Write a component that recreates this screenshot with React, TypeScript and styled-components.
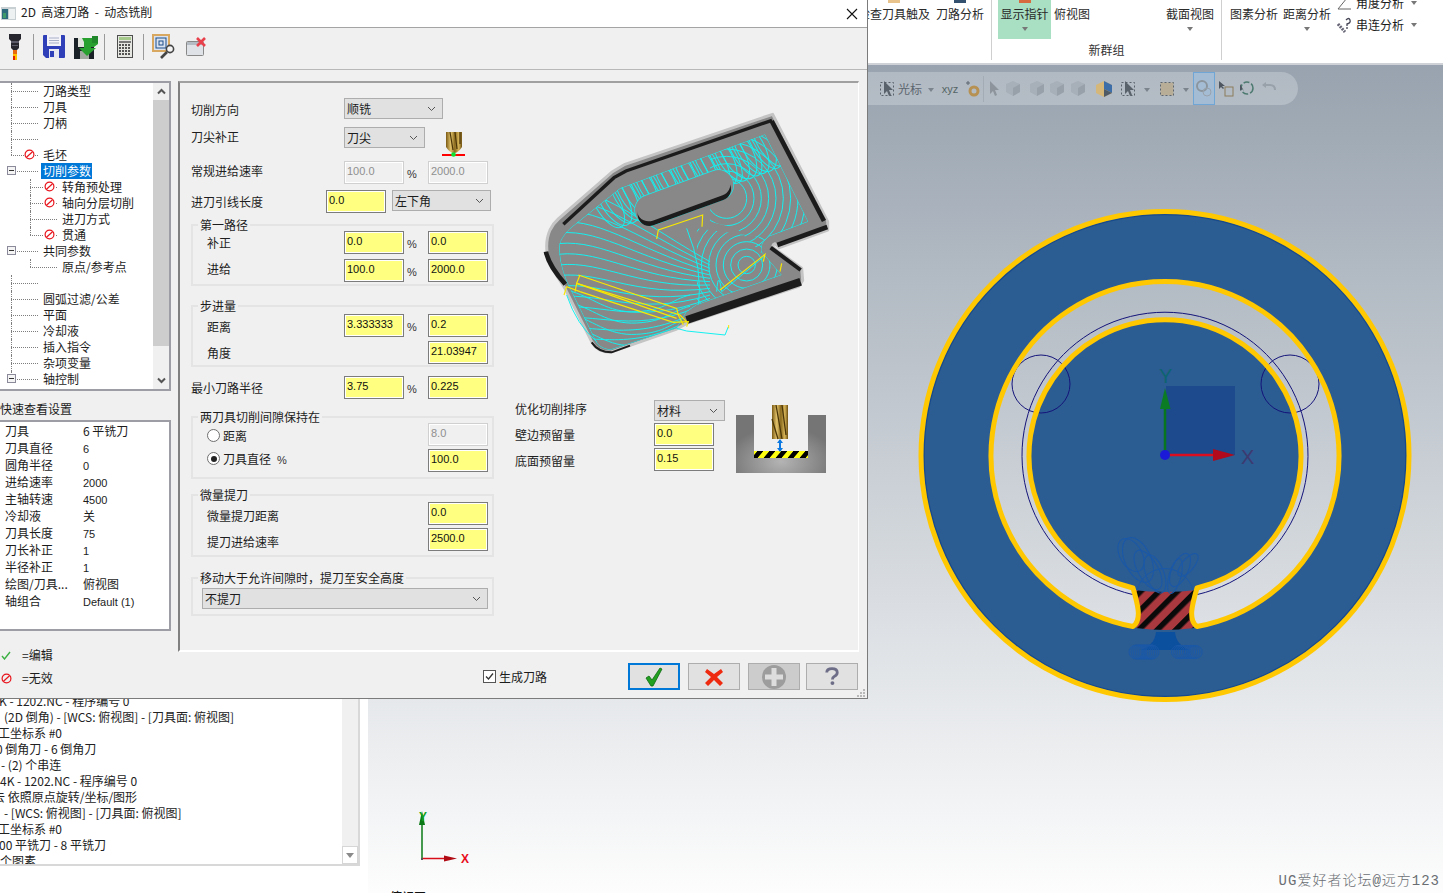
import React from "react";
import styled, { createGlobalStyle } from "styled-components";

const Global = createGlobalStyle`
  html, body { margin: 0; padding: 0; width: 1443px; height: 893px; overflow: hidden; background: #fff; }
  * { box-sizing: border-box; }
  body { font-family: "Noto Sans CJK SC", "Liberation Sans", sans-serif; font-size: 12px; color: #1c1c1c; }
`;

const Page = styled.div`
  position: relative; width: 1443px; height: 893px; overflow: hidden;
  display: flex; flex-direction: column;
`;

/* ---------- ribbon ---------- */
const Ribbon = styled.header`
  height: 65px; flex: none; display: flex; padding-left: 858px; background: #fff;
  border-bottom: 2px solid #cfd2d6;
`;
const RibbonGroup = styled.div<{ $w: number }>`
  width: ${(p) => p.$w}px; height: 60px; border-right: 1px solid #cfcfcf; display: flex; flex-direction: column;
  &:last-child { border-right: 0; }
`;
const RibbonTools = styled.div<{ $pl?: number }>`
  display: flex; height: 39px; padding-left: ${(p) => p.$pl ?? 0}px;
`;
const RibbonCaption = styled.div`
  text-align: center; line-height: 16px; margin-top: 3px; color: #333;
`;
const Tool = styled.div<{ $w: number; $ml?: number; $on?: boolean; $stub?: string }>`
  position: relative; width: ${(p) => p.$w}px; margin-left: ${(p) => p.$ml ?? 0}px; height: 39px; padding-top: 6px;
  line-height: 16px; text-align: center; white-space: nowrap; color: #2a2a2a;
  background: ${(p) => (p.$on ? "#a9dfc2" : "transparent")};
  ${(p) => p.$stub ? `&::before { content: ""; position: absolute; left: 50%; margin-left: -6px; top: 0; width: 12px; height: 3px; background: ${p.$stub}; }` : ""}
`;
const Caret = styled.i`
  display: block; width: 0; height: 0; margin: 5px auto 0; border: 3px solid transparent; border-top: 4px solid #777; border-bottom: 0;
`;
const SmallTools = styled.div`
  margin-left: 6px; margin-top: -5px; display: flex; flex-direction: column; gap: 6px;
`;
const SmallTool = styled.div`
  display: flex; align-items: center; gap: 4px; line-height: 16px; height: 16px; white-space: nowrap;
  &::after { content: ""; border: 3px solid transparent; border-top: 4px solid #777; border-bottom: 0; margin-left: 3px; }
`;

/* ---------- main app ---------- */
const Main = styled.div`
  flex: 1; display: flex; min-height: 0;
`;
const LeftPane = styled.aside`
  width: 368px; flex: none; background: #fff; display: flex; flex-direction: column;
`;
const ListFrame = styled.div`
  width: 360px; height: 801px; display: flex; border-right: 2px solid #d8d8d8; border-bottom: 2px solid #d8d8d8;
`;
const ListBody = styled.div`
  flex: 1; min-width: 0; overflow: hidden; display: flex; flex-direction: column; justify-content: flex-end;
`;
const ListRows = styled.div`
  margin-bottom: -5px;
`;
const ListRow = styled.div<{ $x: number }>`
  height: 16px; line-height: 16px; white-space: nowrap; margin-left: ${(p) => p.$x}px; color: #222;
`;
const ListScroll = styled.div`
  width: 16px; flex: none; background: #f0f0f0; display: flex; flex-direction: column; justify-content: flex-end;
`;
const ListDown = styled.div`
  height: 18px; background: #fff; border: 1px solid #d6d6d6; display: flex; align-items: center; justify-content: center;
  &::after { content: ""; border: 4px solid transparent; border-top: 5px solid #8a8a8a; border-bottom: 0; }
`;
const Viewport = styled.section`
  position: relative; flex: 1; overflow: hidden; background: linear-gradient(180deg, #98a3af 0%, #fdfdfd 100%);
`;
const Canvas = styled.svg`
  position: absolute; left: 0; top: 0; display: block;
`;
const Pill = styled.div`
  position: absolute; left: 500px; top: 7px; width: 430px; height: 33px; border-radius: 0 17px 17px 0;
  background: rgba(255, 255, 255, 0.24); display: flex; align-items: center; padding-left: 11px; color: #566;
`;
const PillSlot = styled.div<{ $w: number; $on?: boolean }>`
  width: ${(p) => p.$w}px; height: ${(p) => (p.$on ? 33 : 20)}px; flex: none; display: flex; align-items: center; justify-content: center;
  ${(p) => (p.$on ? "background: #a5bdd4; border: 1px solid #6fa6d6;" : "")}
`;
const PillText = styled.span`
  color: #5d6670; line-height: 16px; white-space: nowrap;
`;
const PillCaret = styled.i`
  border: 3px solid transparent; border-top: 4px solid #7b838c; border-bottom: 0; margin-top: 2px;
`;
const PillSep = styled.i`
  width: 1px; height: 26px; background: #a3abb4; flex: none;
`;
const Watermark = styled.div`
  position: absolute; right: 3px; bottom: 3px; font-family: "Liberation Mono", "Noto Sans CJK SC", monospace; font-size: 14px;
  letter-spacing: 1px; line-height: 18px; color: #6a6e73; font-weight: 300; white-space: nowrap;
`;
const CutLabel = styled.div`
  position: absolute; left: 22px; top: 824px; line-height: 16px; font-weight: 500; color: #111;
`;

/* ---------- dialog ---------- */
const Dialog = styled.div`
  position: absolute; left: 0; top: 0; z-index: 2; width: 868px; height: 699px; background: #f0f0f0;
  border-right: 1px solid #7b7b7b; border-bottom: 1px solid #7b7b7b; display: flex; flex-direction: column;
`;
const TitleBar = styled.div`
  height: 28px; flex: none; background: #fff; border-bottom: 1px solid #a4a4a4; display: flex; align-items: center; padding-left: 1px; padding-right: 9px;
`;
const TitleText = styled.div`
  margin-left: 5px; line-height: 16px; flex: 1; color: #222; margin-top: -3px; white-space: pre;
`;
const DialogToolbar = styled.div`
  height: 42px; flex: none; border-bottom: 1px solid #b8b8b8; display: flex; align-items: center; padding: 0 0 4px 8px;
`;
const ToolBtn = styled.div<{ $ml: number }>`
  margin-left: ${(p) => p.$ml}px; display: flex; align-items: center; flex: none;
`;
const ToolSep = styled.i<{ $ml: number }>`
  width: 1px; height: 26px; background: #9a9a9a; margin-left: ${(p) => p.$ml}px; flex: none;
`;
const DialogBody = styled.div`
  flex: 1; display: flex; padding-top: 11px; gap: 7px; min-height: 0; position: relative;
`;
const SideColumn = styled.div`
  width: 171px; flex: none; display: flex; flex-direction: column;
`;
const TreeBox = styled.div`
  height: 310px; background: #fff; border: solid #9d9da5; border-width: 2px 2px 2px 0; display: flex; overflow: hidden;
`;
const TreeRows = styled.div`
  flex: 1; min-width: 0; overflow: hidden;
`;
const TreeRowEl = styled.div<{ $level: number; $last?: boolean; $noLine?: boolean }>`
  position: relative; height: 16px; line-height: 16px; white-space: nowrap; display: flex; align-items: center;
  padding-left: ${(p) => (p.$level === 1 ? 41 : 60)}px;
  &::before {
    content: ""; position: absolute; top: 8px; height: 0;
    left: ${(p) => (p.$level === 1 ? 11 : 30)}px; width: 27px; border-top: 1px dotted #7d7d7d;
  }
  &::after {
    content: ""; position: absolute; top: 0; width: 0;
    ${(p) => (p.$noLine ? "display: none;" : "")}
    left: ${(p) => (p.$level === 1 ? 11 : 30)}px; height: ${(p) => (p.$last ? 8 : 16)}px; border-left: 1px dotted #7d7d7d;
  }
`;
const TreeLabel = styled.span<{ $sel?: boolean }>`
  padding: 0 1px 0 2px; height: 16px; line-height: 16px; position: relative; z-index: 1;
  ${(p) => (p.$sel ? "background: #0078d7; color: #fff;" : "")}
`;
const TreeMark = styled.span<{ $level: number }>`
  position: absolute; z-index: 1; top: 2px; left: ${(p) => (p.$level === 1 ? 24 : 44)}px; display: flex; background: #fff;
`;
const Expander = styled.span`
  position: absolute; z-index: 1; left: 7px; top: 3px; width: 9px; height: 9px; border: 1px solid #8a8a9a; background: #f4f4f4;
  &::after { content: ""; position: absolute; left: 1px; right: 1px; top: 3px; height: 1px; background: #333; }
`;
const ScrollBar = styled.div`
  width: 16px; flex: none; background: #f0f0f0; display: flex; flex-direction: column;
`;
const ScrollArrow = styled.div`
  height: 17px; flex: none; display: flex; align-items: center; justify-content: center; color: #555;
`;
const ScrollThumb = styled.div`
  height: 246px; background: #cdcdcd; flex: none;
`;
const ScrollRest = styled.div`
  flex: 1;
`;
const SideHeading = styled.div`
  margin-top: 10px; line-height: 16px;
`;
const QuickBox = styled.div`
  margin-top: 3px; height: 211px; background: #fff; border: solid #9d9da5; border-width: 2px 2px 2px 0; padding: 0 0 0 5px;
`;
const QuickRow = styled.div`
  display: grid; grid-template-columns: 78px 1fr; height: 17px; line-height: 17px; white-space: nowrap;
`;
const Small = styled.span`
  font-family: "Liberation Sans", sans-serif; font-size: 11px;
`;
const LegendRow = styled.div<{ $mt: number }>`
  display: flex; align-items: center; margin-top: ${(p) => p.$mt}px; height: 16px; line-height: 16px; padding-left: 1px;
`;
const LegendIcon = styled.span`
  width: 21px; flex: none; display: flex;
`;

const MainColumn = styled.div`
  width: 681px; flex: none; display: flex; flex-direction: column;
`;
const Panel = styled.div`
  height: 571px; flex: none; display: flex; padding-left: 11px; border: solid; border-width: 2px 1px 2px 2px;
  border-color: #a0a0a0 #fff #fff #808080;
`;
const FormColumn = styled.div`
  width: 303px; flex: none; display: flex; flex-direction: column;
`;
const Row = styled.div<{ $mt?: number; $first?: number }>`
  display: grid; align-items: center; height: 23px; margin-top: ${(p) => p.$mt ?? 0}px;
  grid-template-columns: ${(p) => p.$first ?? 153}px 60px 24px 60px;
`;
const Label = styled.div<{ $dy?: number }>`
  line-height: 16px; white-space: nowrap; color: #1e1e1e; margin-top: ${(p) => (p.$dy ?? 0) * 2}px;
`;
const Pct = styled.div`
  font-family: "Liberation Sans", sans-serif; font-size: 11px; padding-left: 3px; padding-top: 3px; color: #333;
`;
const Field = styled.input<{ $off?: boolean }>`
  width: 60px; height: 23px; margin: 0; padding: 0 2px 3px 2px; outline: 0; flex: none;
  font-family: "Liberation Sans", sans-serif; font-size: 11px; color: ${(p) => (p.$off ? "#8f8f8f" : "#111")};
  background: ${(p) => (p.$off ? "#f0f0f0" : "#ffff80")};
  border: 1px solid ${(p) => (p.$off ? "#d0d0d0" : "#7c7c7c")}; box-shadow: inset 0 0 0 1px #fff; border-radius: 0;
`;
const FieldAt = styled(Field)<{ $col: number }>`
  grid-column: ${(p) => p.$col};
`;
const Combo = styled.div<{ $w: number; $ml?: number }>`
  width: ${(p) => p.$w}px; height: 21px; background: #e1e1e1; border: solid #adadad; border-width: 1px 1.5px 1.5px 1px;
  margin-left: ${(p) => p.$ml ?? 0}px;
  display: flex; align-items: center; justify-content: space-between; padding: 0 6px 0 2px; line-height: 16px; flex: none;
`;
const ComboRow = styled.div<{ $mt: number; $h?: number }>`
  display: flex; align-items: center; height: ${(p) => p.$h ?? 21}px; margin-top: ${(p) => p.$mt}px;
`;
const LeadControls = styled.div`
  display: flex; align-items: flex-start; height: 23px;
`;
const ComboLabel = styled(Label)<{ $w: number }>`
  width: ${(p) => p.$w}px; flex: none;
`;
const TipHolder = styled.div`
  margin: 15px 0 0 17px; display: flex; flex: none;
`;
const Group = styled.div<{ $mt: number; $h: number; $pt: number; $gap: number; $pl?: number }>`
  position: relative; margin-top: ${(p) => p.$mt}px; height: ${(p) => p.$h}px; padding: ${(p) => p.$pt}px 0 0 ${(p) => p.$pl ?? 14}px;
  border: 2px solid #e4e4e4; display: flex; flex-direction: column; gap: ${(p) => p.$gap}px;
`;
const GroupTitle = styled.div`
  position: absolute; left: 5px; top: -9px; padding: 0 2px; background: #f0f0f0; line-height: 16px; white-space: nowrap;
`;
const RadioLabel = styled.label<{ $dy?: number }>`
  display: flex; align-items: center; gap: 3px; white-space: nowrap; margin-top: ${(p) => (p.$dy ?? 0) * 2}px;
`;
const RadioDot = styled.span<{ $on?: boolean }>`
  width: 13px; height: 13px; border-radius: 50%; border: 1px solid #6f6f6f; background: #fff; flex: none; position: relative;
  ${(p) => p.$on ? `&::after { content: ""; position: absolute; inset: 2.5px; border-radius: 50%; background: #222; }` : ""}
`;
const WideComboHolder = styled.div`
  margin: 9px 0 0 9px;
`;
const SideForm = styled.div`
  flex: 1; min-width: 0; display: flex; flex-direction: column;
`;
const Preview = styled.svg`
  display: block; margin: 12px 0 0 36px; flex: none;
`;
const OptionBlock = styled.div`
  margin: 35px 0 0 21px; display: flex; align-items: flex-start;
`;
const OptionGrid = styled.div`
  display: grid; grid-template-columns: 139px 71px; align-items: center; row-gap: 2px;
`;
const OptionPic = styled.svg`
  display: block; margin: 5px 0 0 11px; flex: none;
`;
const Footer = styled.div`
  margin-top: 11px; height: 27px; display: flex; align-items: center; justify-content: flex-end; padding-right: 1px;
`;
const CheckLabel = styled.label`
  display: flex; align-items: center; gap: 3px; margin-right: 81px; line-height: 16px; white-space: nowrap;
`;
const CheckBox = styled.span`
  width: 13px; height: 13px; border: 1px solid #555; background: #fff; display: flex;
`;
const DlgButton = styled.div<{ $primary?: boolean; $off?: boolean; $ml?: number }>`
  width: 52px; height: 27px; margin-left: ${(p) => p.$ml ?? 8}px; display: flex; align-items: center; justify-content: center;
  background: ${(p) => (p.$off ? "#cccccc" : "#e1e1e1")};
  border: ${(p) => (p.$primary ? "2px solid #0078d7" : "1px solid #adadad")};
  &:first-of-type { margin-left: 0; }
`;
const Grip = styled.svg`
  position: absolute; right: 2px; bottom: 1px; display: block;
`;

/* ---------- drawings ---------- */
const NoSign = () => (
  <svg width="11" height="11" viewBox="0 0 11 11">
    <circle cx="5.5" cy="5.5" r="4.4" fill="none" stroke="#e8141c" strokeWidth="1.2" />
    <path d="M2.5 8.2 8.5 2.8" stroke="#e8141c" strokeWidth="1.2" />
  </svg>
);
const Chevron = ({ up }: { up?: boolean }) => (
  <svg width="9" height="7" viewBox="0 0 9 7">
    <path d={up ? "M1 5.5 4.5 2 8 5.5" : "M1 1.5 4.5 5 8 1.5"} fill="none" stroke="#555" strokeWidth="2" />
  </svg>
);
const ComboArrow = () => (
  <svg width="9" height="6" viewBox="0 0 9 6">
    <path d="M1 1 4.5 4.5 8 1" fill="none" stroke="#555" strokeWidth="1" />
  </svg>
);
const GoldDefs = ({ id }: { id: string }) => (
  <linearGradient id={id} x1="0" y1="0" x2="1" y2="0">
    <stop offset="0" stopColor="#7a5a14" />
    <stop offset=".3" stopColor="#e4c56c" />
    <stop offset=".55" stopColor="#8a6a1e" />
    <stop offset=".8" stopColor="#d6b458" />
    <stop offset="1" stopColor="#6d4f10" />
  </linearGradient>
);
const TipIcon = () => (
  <svg width="24" height="27" viewBox="0 0 24 27">
    <defs><GoldDefs id="g1" /></defs>
    <path d="M4 0H20V15Q16 21 12 21Q8 21 4 15Z" fill="url(#g1)" />
    <path d="M8 0 11 18M13 0 15 17M18 0 18 12" stroke="#4b3608" strokeWidth="1.2" fill="none" />
    <rect x="0" y="22" width="23" height="2" fill="#f00" />
    <circle cx="11.5" cy="22.5" r="2.3" fill="#10e030" />
  </svg>
);
const HolderIcon = () => (
  <svg width="14" height="26" viewBox="0 0 14 26">
    <path d="M1 0H13V5L11 7V14L9 16H5L3 14V7L1 5Z" fill="#26262e" />
    <path d="M3 7H11V9H3ZM4 11H10V12H4Z" fill="#5a5a68" />
    <rect x="5" y="16" width="4" height="4" fill="#e86a10" />
    <rect x="5" y="20" width="4" height="6" fill="#ffc000" />
    <rect x="5" y="22" width="2" height="4" fill="#e02000" />
  </svg>
);
const FloppyIcon = () => (
  <svg width="22" height="23" viewBox="0 0 22 23">
    <path d="M0 1Q0 0 1 0H21Q22 0 22 1V22Q22 23 21 23H3L0 20Z" fill="#2f3fb8" />
    <rect x="4" y="0" width="14" height="11" fill="#f4f4f8" />
    <path d="M6 3H16M6 5.5H16M6 8H16" stroke="#a8b0c8" />
    <rect x="6" y="14" width="10" height="9" fill="#e8e8f0" />
    <rect x="7" y="16" width="4" height="6" fill="#2f3fb8" />
  </svg>
);
const SaveAllIcon = () => (
  <svg width="24" height="24" viewBox="0 0 24 24">
    <rect x="0" y="3" width="20" height="21" fill="#1a2228" />
    <rect x="4" y="3" width="12" height="9" fill="#dfe3dc" />
    <rect x="6" y="16" width="9" height="8" fill="#a0a8a0" />
    <path d="M8 3H24V9L20 12H17V13H22L13 21 5 13H10V7L8 3Z" fill="#28a030" />
    <path d="M18 1H24V8H18Z" fill="#20882a" />
  </svg>
);
const CalcIcon = () => (
  <svg width="16" height="23" viewBox="0 0 16 23">
    <rect x=".5" y=".5" width="15" height="22" fill="#e6e6e2" stroke="#4d4d4d" />
    <rect x="2" y="2" width="12" height="3" fill="#a4c98a" />
    <rect x="2" y="6" width="12" height="2" fill="#777" />
    {[10, 13, 16, 19].map((y) => (
      <path key={y} d={`M2 ${y}H14`} stroke="#555" strokeWidth="2" strokeDasharray="2 1" />
    ))}
  </svg>
);
const MagnifyIcon = () => (
  <svg width="25" height="25" viewBox="0 0 25 25">
    <rect x="1" y="1" width="16" height="16" fill="#d9e2ee" stroke="#d9a860" strokeWidth="2" />
    <rect x="4" y="4" width="10" height="10" fill="none" stroke="#1d4d8a" />
    <rect x="7" y="7" width="4" height="4" fill="none" stroke="#1d4d8a" />
    <circle cx="18" cy="15" r="3.6" fill="#f4f4f4" stroke="#444" strokeWidth="1.6" />
    <path d="M15 18 9 24" stroke="#444" strokeWidth="2.6" />
  </svg>
);
const WinXIcon = () => (
  <svg width="21" height="19" viewBox="0 0 21 19">
    <rect x=".5" y="4.5" width="17" height="14" rx="1" fill="#dfe2e6" stroke="#888" />
    <rect x="1" y="5" width="16" height="3" fill="#b6bcc4" />
    <path d="M11 1 19 9M19 1 11 9" stroke="#e8414b" strokeWidth="2.6" />
  </svg>
);
const TitleIcon = () => (
  <svg width="15" height="13" viewBox="0 0 15 13">
    <rect width="15" height="13" fill="#c9d0d4" />
    <rect x="1" y="2" width="6" height="10" fill="#2c6a7c" />
    <rect x="2" y="6" width="3" height="5" fill="#3f9a6a" />
    <rect x="8" y="2" width="6" height="10" fill="#eef1f2" />
  </svg>
);
const CloseX = () => (
  <svg width="12" height="12" viewBox="0 0 12 12">
    <path d="M1 1 11 11M11 1 1 11" stroke="#111" strokeWidth="1.1" />
  </svg>
);

const Cursor = ({ dotted }: { dotted?: boolean }) => (
  <svg width="15" height="17" viewBox="0 0 15 17">
    {dotted && <rect x=".5" y="2.5" width="13" height="13" fill="none" stroke="#59616a" strokeDasharray="2 2" />}
    <path d="M4 1V14L7 11 9 16 11 15 9 10H13Z" fill={dotted ? "#59616a" : "#8d949c"} />
  </svg>
);
const FadedCube = ({ color = "#a7afb8" }: { color?: string }) => (
  <svg width="16" height="17" viewBox="0 0 16 17">
    <path d="M8 1 15 4V12L8 16 1 12V4Z" fill={color} />
    <path d="M8 8 15 4V12L8 16Z" fill="#98a0aa" />
  </svg>
);
const ColorCube = () => (
  <svg width="18" height="18" viewBox="0 0 18 18">
    <path d="M9 1 17 5V13L9 17 1 13V5Z" fill="#d6b77a" />
    <path d="M9 1 17 5V13L9 9Z" fill="#3d6ea8" />
    <path d="M9 9 17 13 9 17Z" fill="#4e5a66" />
  </svg>
);

const mm = (n: number, a: number, b: number) => a + ((b - a) * n);

/* toolpath preview: curves are computed from small formulas */
const FLOOR = "M705 118 L835 380 L715 425 Q690 445 695 470 L755 540 L500 630 L470 650 L440 700 L240 765 Q205 760 195 735 L110 560 Q85 500 88 450 Q90 430 120 400 L270 280 Z";
const OUTER = "M728 58 L893 380 L893 405 L748 458 L735 446 Q722 452 735 462 L815 520 L818 556 L806 574 L470 685 L440 702 L240 772 Q200 770 185 740 L105 580 L60 510 Q40 450 60 405 Q70 385 85 372 L245 232 L285 208 Z";

const PreviewDrawing = () => {
  const waves = Array.from({ length: 15 }, (_, i) => {
    const y = 290 + i * 32;
    return `M60 ${y} C200 ${y - 30},310 ${y + 80 - i * 2},${540} ${500 + i * 10}`;
  });
  const lows = Array.from({ length: 5 }, (_, i) => {
    const y = 585 + i * 34;
    return `M110 ${y} C190 ${y + 20},230 ${y + 70},320 ${y + 65} S 420 ${y + 30},480 ${y + 15}`;
  });
  const loops = Array.from({ length: 26 }, (_, i) => ({
    cx: mm(i / 25, 230, 720),
    cy: mm(i / 25, 320, 135),
    rx: 88,
    ry: 36 + (i % 3) * 4,
  }));
  const right = Array.from({ length: 12 }, (_, i) => 60 + i * 22);
  const lowRight = Array.from({ length: 8 }, (_, i) => 26 + i * 22);
  return (
    <Preview width="310" height="270" viewBox="0 0 930 810">
      <defs>
        <clipPath id="floor"><path d={FLOOR} /></clipPath>
        <clipPath id="rightZone"><path d="M540 100H900V480H700L620 400 540 380Z" /></clipPath>
        <clipPath id="lowZone"><path d="M500 400 720 430 770 560 500 650Z" /></clipPath>
      </defs>
      <path d={OUTER} fill="#888" stroke="#c4c4c4" strokeWidth="9" strokeLinejoin="round" />
      <path d={FLOOR} fill="#888" />
      <path d="M100 388 L252 248 L288 228 L726 76" fill="none" stroke="#1c1c1c" strokeWidth="10" />
      <path d="M725 78 L882 378" fill="none" stroke="#1c1c1c" strokeWidth="14" />
      <path d="M892 396 L742 450" fill="none" stroke="#1c1c1c" strokeWidth="14" />
      <path d="M722 458 L812 525" fill="none" stroke="#1c1c1c" strokeWidth="12" />
      <path d="M812 560 L470 675" fill="none" stroke="#1c1c1c" strokeWidth="24" />
      <path d="M48 470 Q55 510 106 568" fill="none" stroke="#1c1c1c" strokeWidth="14" />
      <path d="M185 742 Q205 772 245 772 L300 752" fill="none" stroke="#1c1c1c" strokeWidth="6" />
      <g clipPath="url(#floor)" fill="none" stroke="#14f0f0" strokeWidth="3">
        <path d={FLOOR} />
        {loops.map((l, i) => (
          <ellipse key={i} cx={l.cx} cy={l.cy} rx={l.rx} ry={l.ry} transform={`rotate(60 ${l.cx} ${l.cy})`} />
        ))}
        <g clipPath="url(#rightZone)">
          {right.map((r) => <circle key={r} cx="590" cy="310" r={r} />)}
        </g>
        <g clipPath="url(#lowZone)">
          {lowRight.map((r) => <circle key={r} cx="650" cy="510" r={r} />)}
        </g>
        {waves.map((d, i) => <path key={i} d={d} />)}
        {lows.map((d, i) => <path key={i} d={d} />)}
        <path d="M470 400 Q520 520 505 640M560 590 Q565 520 575 590 L720 470" />
      </g>
      <path d="M360 345 L565 270" stroke="#14f0f0" strokeWidth="94" strokeLinecap="round" />
      <path d="M360 345 L565 270" stroke="#888" strokeWidth="90" strokeLinecap="round" />
      <path d="M358 358 L568 282" stroke="#1c1c1c" strokeWidth="70" strokeLinecap="round" />
      <path d="M356 344 L566 268" stroke="#888" strokeWidth="70" strokeLinecap="round" />
      <g fill="none" stroke="#f8e800" strokeWidth="3.5">
        <path d="M380 432 385 405 518 360 516 395" />
        <path d="M570 585 705 478 700 500" />
        <path d="M750 530 755 505" />
        <path d="M145 540 440 640 445 660 460 690" />
        <path d="M140 565 150 540M140 565 450 660 470 680" />
        <path d="M135 590 140 565 440 670" />
        <path d="M102 600 110 575 150 590 430 682 475 680 470 695" />
      </g>
      <path d="M110 600 Q140 690 200 740M440 700 470 708 585 720 595 695" fill="none" stroke="#14f0f0" strokeWidth="3" />
      <path d="M596 700 596 690" stroke="#f8e800" strokeWidth="3" />
    </Preview>
  );
};

const StockPicture = () => (
  <OptionPic width="90" height="68" viewBox="0 0 90 68">
    <defs>
      <GoldDefs id="g2" />
      <radialGradient id="steel" cx=".5" cy=".8" r=".6">
        <stop offset="0" stopColor="#b4b4b4" />
        <stop offset="1" stopColor="#757575" />
      </radialGradient>
      <pattern id="hazard" width="12" height="7" patternUnits="userSpaceOnUse" patternTransform="skewX(-40)">
        <rect width="12" height="7" fill="#ffff10" />
        <rect width="6" height="7" fill="#000" />
      </pattern>
    </defs>
    <path d="M0 10H18V52H72V10H90V68H0Z" fill="url(#steel)" />
    <rect x="18" y="46" width="54" height="7" fill="url(#hazard)" />
    <rect x="36" y="0" width="16" height="34" fill="url(#g2)" />
    <path d="M40 0 46 34M46 0 50 30M36 14 42 34" stroke="#4b3608" strokeWidth="1.3" fill="none" />
    <path d="M44 35V46" stroke="#0a78e0" strokeWidth="2" />
    <path d="M44 34 47 38H41ZM44 47 47 43H41Z" fill="#0a78e0" />
  </OptionPic>
);

const BigCheck = () => (
  <svg width="18" height="20" viewBox="0 0 18 20">
    <path d="M1 11 4 9 7 13 15 1 17 2 8 19H6Z" fill="#22a020" stroke="#0b6a12" strokeWidth=".8" />
  </svg>
);
const BigX = () => (
  <svg width="18" height="18" viewBox="0 0 18 18">
    <path d="M2 1 9 6 16 1 18 4 12 9 18 15 15 18 9 12 3 18 0 15 6 9 0 4Z" fill="#ee2a10" />
  </svg>
);
const BigPlus = () => (
  <svg width="24" height="24" viewBox="0 0 24 24">
    <circle cx="12" cy="12" r="12" fill="#9d9d9d" />
    <path d="M12 3V21M3 12H21" stroke="#ddd" strokeWidth="5" />
  </svg>
);
const BigHelp = () => (
  <svg width="14" height="19" viewBox="0 0 16 21">
    <path d="M2 6Q2 1.5 8 1.5T14 6Q14 9 10.5 10.5 8.5 11.5 8.5 14" fill="none" stroke="#6d6d88" strokeWidth="3.2" />
    <circle cx="8.5" cy="18" r="2.2" fill="#6d6d88" />
  </svg>
);

const Drawing = () => {
  const cx = 1165;
  const cy = 455.5;
  const hole = `M1133 626.5 A174 174 0 1 1 1197 626.5 C1188 620,1192 605,1197 588 A136 136 0 1 0 1133 588 C1138 605,1142 620,1133 626.5 Z`;
  const outer = `M${cx - 243} ${cy} a243 243 0 1 0 486 0 a243 243 0 1 0 -486 0 Z`;
  const topLoops = [
    [1131, 555, 11, 18, -30], [1138, 560, 13, 24, -25], [1148, 570, 10, 22, -30],
    [1155, 574, 9, 20, -20], [1180, 570, 8, 18, 25], [1175, 576, 6, 18, 15], [1188, 565, 6, 14, 40],
  ];
  const spirals = Array.from({ length: 9 }, (_, i) => i);
  return (
    <Canvas width="1075" height="828" viewBox="368 65 1075 828">
      <defs>
        <pattern id="stripe" width="13" height="13" patternUnits="userSpaceOnUse" patternTransform="rotate(-45)">
          <rect width="13" height="13" fill="#a9383f" />
          <rect width="13" height="5.5" fill="#0a0a0a" />
        </pattern>
      </defs>
      <path d={`${outer} ${hole}`} fill="#2b5c92" fillRule="evenodd" />
      <circle cx={cx} cy={cy} r="241" fill="none" stroke="#174a8c" strokeWidth="1.5" />
      <rect x="1166" y="386" width="69" height="69" fill="#1c4a8c" />
      <path d="M1133 594.600 A143 143 0 1 1 1197 594.600" fill="none" stroke="#14147a" strokeWidth="1" />
      <circle cx="1041" cy="384" r="29" fill="none" stroke="#14147a" strokeWidth="1" />
      <circle cx="1290" cy="384" r="29" fill="none" stroke="#14147a" strokeWidth="1" />
      <path d="M1133 590 Q1165 594 1197 590 L1190 620 1194 628 Q1165 632 1136 628 L1140 620Z" fill="url(#stripe)" />
      <circle cx={cx} cy={cy} r="244" fill="none" stroke="#ffc800" strokeWidth="5" />
      <path d={hole} fill="none" stroke="#ffc800" strokeWidth="5" strokeLinejoin="round" />
      <path d="M1156 632 H1175 Q1176 645 1190 650 H1140 Q1155 645 1156 632Z" fill="#0b4f9f" />
      <g fill="none" stroke="#1a58a8" strokeWidth="1">
        <path d="M1137 590 A29 29 0 0 1 1193 590" />
        {topLoops.map(([x, y, rx, ry, a], i) => (
          <ellipse key={i} cx={x} cy={y} rx={rx} ry={ry} transform={`rotate(${a} ${x} ${y})`} />
        ))}
        {spirals.map((i) => <circle key={i} cx={1136 + i * 2} cy="652" r="7" />)}
        {spirals.map((i) => <circle key={`r${i}`} cx={1178 + i * 2.2} cy="652" r="6.5" />)}
      </g>
      <path d="M1165 455V400" stroke="#08761e" strokeWidth="2.5" />
      <path d="M1165 388 1170.500 409H1160Z" fill="#0c7c24" />
      <path d="M1165 455H1216" stroke="#dd0d20" strokeWidth="2.5" />
      <path d="M1235 455 1213 449V461Z" fill="#b00a1c" />
      <circle cx="1165" cy="455" r="5" fill="#1a1ad8" />
      <path d="M422 859V820" stroke="#0a7a16" strokeWidth="1.5" />
      <path d="M422 811 425 825H419Z" fill="#0a7a16" />
      <path d="M422 858.500H450" stroke="#d80d1a" strokeWidth="1.5" />
      <path d="M457 858.500 444 855.500V861.500Z" fill="#b00a14" />
      <path d="M421 858h2v2h-2z" fill="#555" />
    </Canvas>
  );
};

const AxisLabel = styled.span<{ $x: number; $y: number; $c: string; $s: number }>`
  position: absolute; left: ${(p) => p.$x - 368}px; top: ${(p) => p.$y - 65}px; color: ${(p) => p.$c};
  font: ${(p) => (p.$s < 14 ? "bold" : "normal")} ${(p) => p.$s}px/1 "Liberation Sans", sans-serif;
`;

const treeData: Array<{ t?: string; l: number; bad?: boolean; sel?: boolean; exp?: boolean; last?: boolean; noLine?: boolean }> = [
  { t: "刀路类型", l: 1 }, { t: "刀具", l: 1 }, { t: "刀柄", l: 1 }, { l: 1 },
  { t: "毛坯", l: 1, bad: true, last: true },
  { t: "切削参数", l: 1, sel: true, exp: true, noLine: true },
  { t: "转角预处理", l: 2, bad: true }, { t: "轴向分层切削", l: 2, bad: true },
  { t: "进刀方式", l: 2 }, { t: "贯通", l: 2, bad: true, last: true },
  { t: "共同参数", l: 1, exp: true, noLine: true }, { t: "原点/参考点", l: 2, last: true },
  { l: 1 }, { t: "圆弧过滤/公差", l: 1 }, { t: "平面", l: 1 }, { t: "冷却液", l: 1 },
  { t: "插入指令", l: 1 }, { t: "杂项变量", l: 1 }, { t: "轴控制", l: 1, exp: true, last: true },
];

const quick: Array<[string, React.ReactNode]> = [
  ["刀具", <>6 平铣刀</>], ["刀具直径", <Small>6</Small>], ["圆角半径", <Small>0</Small>],
  ["进给速率", <Small>2000</Small>], ["主轴转速", <Small>4500</Small>], ["冷却液", "关"],
  ["刀具长度", <Small>75</Small>], ["刀长补正", <Small>1</Small>], ["半径补正", <Small>1</Small>],
  ["绘图/刀具...", "俯视图"], ["轴组合", <Small>Default (1)</Small>],
];

const listRows: Array<[number, string]> = [
  [-1, "K - 1202.NC - 程序编号 0"],
  [4, "(2D 倒角) - [WCS: 俯视图] - [刀具面: 俯视图]"],
  [-2, "工坐标系 #0"],
  [-4, "0 倒角刀 - 6 倒角刀"],
  [1, "- (2) 个串连"],
  [0, "4K - 1202.NC - 程序编号 0"],
  [-7, "去 依照原点旋转/坐标/图形"],
  [4, "- [WCS: 俯视图] - [刀具面: 俯视图]"],
  [-2, "工坐标系 #0"],
  [-1, "00 平铣刀 - 8 平铣刀"],
  [0, "个图素"],
];

const DualRow = ({ label, a, b, first, mt, dy }: { label: string; a: string; b: string; first?: number; mt?: number; dy?: number }) => (
  <Row $first={first ?? 137} $mt={mt}>
    <Label $dy={dy}>{label}</Label>
    <Field readOnly value={a} />
    <Pct>%</Pct>
    <Field readOnly value={b} />
  </Row>
);
const SingleRow = ({ label, v, off }: { label: React.ReactNode; v: string; off?: boolean }) => (
  <Row $first={137}>
    {label}
    <FieldAt $col={4} readOnly value={v} $off={off} />
  </Row>
);

export default function App() {
  return (
    <Page>
      <Global />
      <Ribbon>
        <RibbonGroup $w={134}>
          <RibbonTools>
            <Tool $w={72} $stub="#e8c48c">检查刀具触及</Tool>
            <Tool $w={48} $ml={6} $stub="#33506e">刀路分析</Tool>
          </RibbonTools>
        </RibbonGroup>
        <RibbonGroup $w={230}>
          <RibbonTools $pl={6}>
            <Tool $w={53} $on $stub="#d86a40">显示指针<Caret /></Tool>
            <Tool $w={36} $ml={3}>俯视图</Tool>
            <Tool $w={48} $ml={76}>截面视图<Caret /></Tool>
          </RibbonTools>
          <RibbonCaption>新群组</RibbonCaption>
        </RibbonGroup>
        <RibbonGroup $w={221}>
          <RibbonTools $pl={8}>
            <Tool $w={48}>图素分析</Tool>
            <Tool $w={48} $ml={5}>距离分析<Caret /></Tool>
            <SmallTools>
              <SmallTool>
                <svg width="15" height="14" viewBox="0 0 15 14"><path d="M1 13 10 2M1 13H14" stroke="#666" fill="none" /></svg>
                角度分析
              </SmallTool>
              <SmallTool>
                <svg width="15" height="16" viewBox="0 0 15 16"><path d="M1 7 8 15" stroke="#667" strokeWidth="3" strokeDasharray="2 1" /><path d="M9 3Q12 0 13 3T10 7V9M10 10V12" stroke="#445" fill="none" strokeWidth="1.3" /></svg>
                串连分析
              </SmallTool>
            </SmallTools>
          </RibbonTools>
        </RibbonGroup>
      </Ribbon>
      <Main>
        <LeftPane>
          <ListFrame>
            <ListBody>
              <ListRows>
                {listRows.map(([x, t], i) => <ListRow key={i} $x={x}>{t}</ListRow>)}
              </ListRows>
            </ListBody>
            <ListScroll><ListDown /></ListScroll>
          </ListFrame>
        </LeftPane>
        <Viewport>
          <Drawing />
          <Pill>
            <PillSlot $w={16}><Cursor dotted /></PillSlot>
            <PillSlot $w={30}><PillText>光标</PillText></PillSlot>
            <PillSlot $w={12}><PillCaret /></PillSlot>
            <PillSlot $w={26}><Small>xyz</Small></PillSlot>
            <PillSlot $w={20}>
              <svg width="16" height="17" viewBox="0 0 16 17"><circle cx="9" cy="11" r="4" fill="none" stroke="#b69152" strokeWidth="3" /><path d="M3 1V5M1 3H5" stroke="#5d6670" /></svg>
            </PillSlot>
            <PillSep />
            <PillSlot $w={18}><Cursor /></PillSlot>
            <PillSlot $w={22}><FadedCube /></PillSlot>
            <PillSlot $w={25}><FadedCube /></PillSlot>
            <PillSlot $w={16}><FadedCube /></PillSlot>
            <PillSlot $w={26}><FadedCube /></PillSlot>
            <PillSlot $w={26}><ColorCube /></PillSlot>
            <PillSlot $w={22}><Cursor dotted /></PillSlot>
            <PillSlot $w={16}><PillCaret /></PillSlot>
            <PillSlot $w={24}>
              <svg width="14" height="14" viewBox="0 0 14 14"><rect x=".5" y=".5" width="13" height="13" fill="#b8ad96" stroke="#5d6670" strokeDasharray="2 2" /></svg>
            </PillSlot>
            <PillSlot $w={14}><PillCaret /></PillSlot>
            <PillSlot $w={22} $on>
              <svg width="16" height="17" viewBox="0 0 16 17"><circle cx="6" cy="6" r="5" fill="none" stroke="#8b959e" strokeWidth="2" /><circle cx="11" cy="12" r="4" fill="none" stroke="#98a2ac" /></svg>
            </PillSlot>
            <PillSlot $w={22}>
              <svg width="16" height="17" viewBox="0 0 16 17"><path d="M1 1V9L3 7 5 9 6 8 4 6H7Z" fill="#4d5660" /><rect x="7" y="7" width="8" height="9" fill="none" stroke="#8d7d5c" /></svg>
            </PillSlot>
            <PillSlot $w={20}>
              <svg width="16" height="17" viewBox="0 0 16 17"><circle cx="8" cy="8" r="6" fill="none" stroke="#4d7a70" strokeWidth="1.5" strokeDasharray="6 2" /><path d="M1 4V11L3 9 5 11Z" fill="#4d5660" /></svg>
            </PillSlot>
            <PillSlot $w={24}>
              <svg width="16" height="17" viewBox="0 0 16 17"><path d="M3 5H9Q14 5 14 10" fill="none" stroke="#98a0a9" strokeWidth="2" /><path d="M5 2 1 5 5 8Z" fill="#98a0a9" /></svg>
            </PillSlot>
          </Pill>
          <AxisLabel $x={1159} $y={366} $c="#0e6470" $s={20}>Y</AxisLabel>
          <AxisLabel $x={1241} $y={447} $c="#3d3a70" $s={20}>X</AxisLabel>
          <AxisLabel $x={419} $y={811} $c="#12a020" $s={12}>Y</AxisLabel>
          <AxisLabel $x={461} $y={853} $c="#e80d1a" $s={12}>X</AxisLabel>
          <CutLabel>俯视图</CutLabel>
          <Watermark>UG爱好者论坛@远方123</Watermark>
        </Viewport>
      </Main>

      <Dialog>
        <TitleBar>
          <TitleIcon />
          <TitleText>2D  高速刀路  -  动态铣削</TitleText>
          <CloseX />
        </TitleBar>
        <DialogToolbar>
          <ToolBtn $ml={0}><HolderIcon /></ToolBtn>
          <ToolSep $ml={11} />
          <ToolBtn $ml={9}><FloppyIcon /></ToolBtn>
          <ToolBtn $ml={9}><SaveAllIcon /></ToolBtn>
          <ToolSep $ml={6} />
          <ToolBtn $ml={12}><CalcIcon /></ToolBtn>
          <ToolSep $ml={10} />
          <ToolBtn $ml={8}><MagnifyIcon /></ToolBtn>
          <ToolBtn $ml={9}><WinXIcon /></ToolBtn>
        </DialogToolbar>
        <DialogBody>
          <SideColumn>
            <TreeBox>
              <TreeRows>
                {treeData.map((r, i) => (
                  <TreeRowEl key={i} $level={r.l} $last={r.last} $noLine={r.noLine}>
                    {r.exp && <Expander />}
                    {r.bad && <TreeMark $level={r.l}><NoSign /></TreeMark>}
                    {r.t && <TreeLabel $sel={r.sel}>{r.t}</TreeLabel>}
                  </TreeRowEl>
                ))}
              </TreeRows>
              <ScrollBar>
                <ScrollArrow><Chevron up /></ScrollArrow>
                <ScrollThumb />
                <ScrollRest />
                <ScrollArrow><Chevron /></ScrollArrow>
              </ScrollBar>
            </TreeBox>
            <SideHeading>快速查看设置</SideHeading>
            <QuickBox>
              {quick.map(([k, v], i) => (
                <QuickRow key={i}><span>{k}</span><span>{v}</span></QuickRow>
              ))}
            </QuickBox>
            <LegendRow $mt={16}>
              <LegendIcon>
                <svg width="10" height="9" viewBox="0 0 10 9"><path d="M1 5 3.500 8 9 1" fill="none" stroke="#3cb043" strokeWidth="1.4" /></svg>
              </LegendIcon>
              =编辑
            </LegendRow>
            <LegendRow $mt={7}>
              <LegendIcon><NoSign /></LegendIcon>
              =无效
            </LegendRow>
          </SideColumn>
          <MainColumn>
            <Panel>
              <FormColumn>
                <ComboRow $mt={15}>
                  <ComboLabel $w={153} $dy={1}>切削方向</ComboLabel>
                  <Combo $w={99}>顺铣<ComboArrow /></Combo>
                </ComboRow>
                <ComboRow $mt={8}>
                  <ComboLabel $w={153} $dy={-1}>刀尖补正</ComboLabel>
                  <Combo $w={81}>刀尖<ComboArrow /></Combo>
                  <TipHolder><TipIcon /></TipHolder>
                </ComboRow>
                <Row $mt={13}>
                  <Label $dy={-2}>常规进给速率</Label>
                  <Field readOnly value="100.0" $off />
                  <Pct>%</Pct>
                  <Field readOnly value="2000.0" $off />
                </Row>
                <ComboRow $mt={6} $h={23}>
                  <ComboLabel $w={135}>进刀引线长度</ComboLabel>
                  <LeadControls>
                    <Field readOnly value="0.0" />
                    <Combo $w={99} $ml={6}>左下角<ComboArrow /></Combo>
                  </LeadControls>
                </ComboRow>
                <Group $mt={11} $h={62} $pt={5} $gap={5}>
                  <GroupTitle>第一路径</GroupTitle>
                  <DualRow label="补正" a="0.0" b="0.0" />
                  <DualRow label="进给" a="100.0" b="2000.0" dy={-2} />
                </Group>
                <Group $mt={19} $h={62} $pt={7} $gap={4}>
                  <GroupTitle>步进量</GroupTitle>
                  <DualRow label="距离" a="3.333333" b="0.2" dy={1} />
                  <SingleRow label={<Label>角度</Label>} v="21.03947" />
                </Group>
                <DualRow label="最小刀路半径" a="3.75" b="0.225" first={153} mt={9} />
                <Group $mt={17} $h={63} $pt={5} $gap={3}>
                  <GroupTitle>两刀具切削间隙保持在</GroupTitle>
                  <SingleRow label={<RadioLabel $dy={1}><RadioDot />距离</RadioLabel>} v="8.0" off />
                  <SingleRow label={<RadioLabel $dy={-2}><RadioDot $on />刀具直径 <Pct>%</Pct></RadioLabel>} v="100.0" />
                </Group>
                <Group $mt={15} $h={63} $pt={6} $gap={3}>
                  <GroupTitle>微量提刀</GroupTitle>
                  <SingleRow label={<Label $dy={2}>微量提刀距离</Label>} v="0.0" />
                  <SingleRow label={<Label $dy={2}>提刀进给速率</Label>} v="2500.0" />
                </Group>
                <Group $mt={20} $h={39} $pt={0} $gap={0} $pl={0}>
                  <GroupTitle>移动大于允许间隙时，提刀至安全高度</GroupTitle>
                  <WideComboHolder>
                    <Combo $w={286}>不提刀<ComboArrow /></Combo>
                  </WideComboHolder>
                </Group>
              </FormColumn>
              <SideForm>
                <PreviewDrawing />
                <OptionBlock>
                  <OptionGrid>
                    <Label $dy={-2}>优化切削排序</Label>
                    <Combo $w={71}>材料<ComboArrow /></Combo>
                    <Label>壁边预留量</Label>
                    <Field readOnly value="0.0" />
                    <Label $dy={1}>底面预留量</Label>
                    <Field readOnly value="0.15" />
                  </OptionGrid>
                  <StockPicture />
                </OptionBlock>
              </SideForm>
            </Panel>
            <Footer>
              <CheckLabel>
                <CheckBox>
                  <svg width="11" height="11" viewBox="0 0 11 11"><path d="M2 5.500 4.500 8 9 2.500" fill="none" stroke="#333" strokeWidth="1.3" /></svg>
                </CheckBox>
                生成刀路
              </CheckLabel>
              <DlgButton $primary><BigCheck /></DlgButton>
              <DlgButton><BigX /></DlgButton>
              <DlgButton $off><BigPlus /></DlgButton>
              <DlgButton $ml={6}><BigHelp /></DlgButton>
            </Footer>
          </MainColumn>
          <Grip width="8" height="8" viewBox="0 0 8 8">
            <path d="M6 0h2v2H6zM3 3h2v2H3zM6 3h2v2H6zM0 6h2v2H0zM3 6h2v2H3zM6 6h2v2H6z" fill="#b8b8b8" />
          </Grip>
        </DialogBody>
      </Dialog>
    </Page>
  );
}
